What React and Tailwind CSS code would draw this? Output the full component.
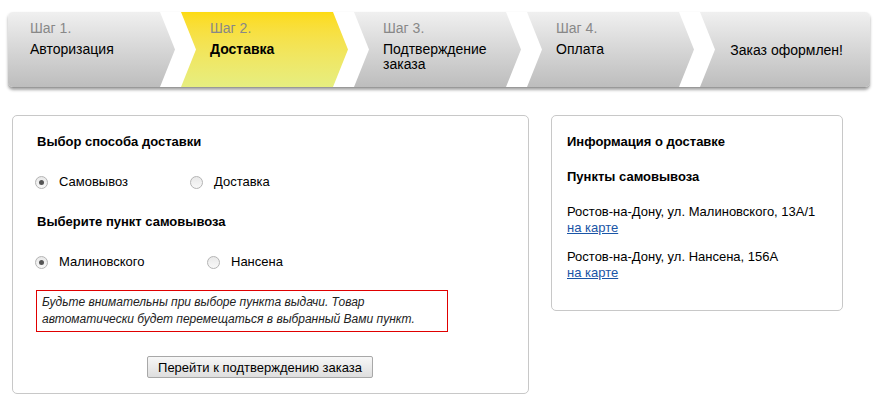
import React from "react";

const steps = [
  { label: "Шаг 1.", title: "Авторизация" },
  { label: "Шаг 2.", title: "Доставка", active: true },
  { label: "Шаг 3.", title: "Подтверждение заказа" },
  { label: "Шаг 4.", title: "Оплата" },
];

const clipFirst =
  "[clip-path:polygon(0_0,calc(100%_-_15px)_0,100%_50%,calc(100%_-_15px)_100%,0_100%)]";
const clipMid =
  "[clip-path:polygon(0_0,calc(100%_-_15px)_0,100%_50%,calc(100%_-_15px)_100%,0_100%,15px_50%)]";
const clipLast = "[clip-path:polygon(0_0,100%_0,100%_100%,0_100%,15px_50%)]";

function Radio({ checked }) {
  return (
    <span className="w-[13px] h-[13px] rounded-full border border-[#b4b4b4] bg-gradient-to-b from-[#e9e9e9] to-[#f8f8f8] flex items-center justify-center shrink-0">
      {checked && <span className="w-[5px] h-[5px] rounded-full bg-[#555]" />}
    </span>
  );
}

function Steps() {
  return (
    <div className="mx-[8px] mt-[12px] h-[76px] flex gap-[6px] bg-white rounded-[5px] overflow-hidden shadow-[0_2px_3px_rgba(0,0,0,0.35)] border-b border-[#999]">
      {steps.map((s, i) => (
        <div
          key={i}
          className={`w-[167px] h-full shrink-0 pt-[8px] ${
            i === 0 ? clipFirst + " pl-[22px]" : clipMid + " pl-[29px]"
          } ${
            s.active
              ? "bg-gradient-to-b from-[#fddb10] to-[#e6ee80]"
              : "bg-gradient-to-b from-[#f0f0f0] to-[#bdbdbd]"
          }`}
        >
          <div className="text-[14px] leading-[16px] text-[#888]">{s.label}</div>
          <div
            className={`mt-[6px] text-[14px] leading-[15px] text-black pr-[30px] ${
              s.active ? "font-bold" : ""
            }`}
          >
            {s.title}
          </div>
        </div>
      ))}
      <div
        className={`flex-1 h-full ${clipLast} bg-gradient-to-b from-[#f0f0f0] to-[#bdbdbd] flex items-center justify-end pr-[27px] pt-[1px] text-[14px] text-black`}
      >
        Заказ оформлен!
      </div>
    </div>
  );
}

export default function App() {
  return (
    <div
      className="w-[878px] h-[417px] bg-white overflow-hidden"
      style={{ fontFamily: '"Liberation Sans", Arial, sans-serif' }}
    >
      <Steps />
      <div className="flex items-start mt-[27px] pl-[12px] gap-[22px]">
        <div className="w-[517px] h-[279px] border border-[#c8c8c8] rounded-[5px] px-[24px] pt-[18px] text-[13px] leading-[16px] text-black">
          <div className="font-bold">Выбор способа доставки</div>
          <div className="flex items-center mt-[24px] h-[16px] -ml-[2px]">
            <div className="flex items-center gap-[11px] w-[155px]">
              <Radio checked />
              <span>Самовывоз</span>
            </div>
            <div className="flex items-center gap-[11px]">
              <Radio />
              <span>Доставка</span>
            </div>
          </div>
          <div className="font-bold mt-[24px]">Выберите пункт самовывоза</div>
          <div className="flex items-center mt-[24px] h-[16px] -ml-[2px]">
            <div className="flex items-center gap-[11px] w-[172px]">
              <Radio checked />
              <span>Малиновского</span>
            </div>
            <div className="flex items-center gap-[11px]">
              <Radio />
              <span>Нансена</span>
            </div>
          </div>
          <div className="mt-[20px] -ml-[1px] w-[412px] border border-[#e00000] px-[5px] py-[3px] text-[12px] leading-[17px] italic text-[#222]">
            Будьте внимательны при выборе пункта выдачи. Товар автоматически будет
            перемещаться в выбранный Вами пункт.
          </div>
          <div className="flex justify-center mt-[24px] pr-[21px]">
            <button className="h-[22px] px-[10px] border border-[#a8a8a8] rounded-[2px] bg-gradient-to-b from-[#f7f7f7] to-[#dedede] text-[13px] text-black leading-none">
              Перейти к подтверждению заказа
            </button>
          </div>
        </div>
        <div className="w-[292px] h-[196px] border border-[#c8c8c8] rounded-[5px] px-[15px] pt-[18px] text-[13px] leading-[16px] text-black">
          <div className="font-bold">Информация о доставке</div>
          <div className="font-bold mt-[19px]">Пункты самовывоза</div>
          <div className="mt-[19px]">Ростов-на-Дону, ул. Малиновского, 13А/1</div>
          <a href="#" className="block text-[#1a55a6] underline w-max">на карте</a>
          <div className="mt-[13px]">Ростов-на-Дону, ул. Нансена, 156А</div>
          <a href="#" className="block text-[#1a55a6] underline w-max">на карте</a>
        </div>
      </div>
    </div>
  );
}
